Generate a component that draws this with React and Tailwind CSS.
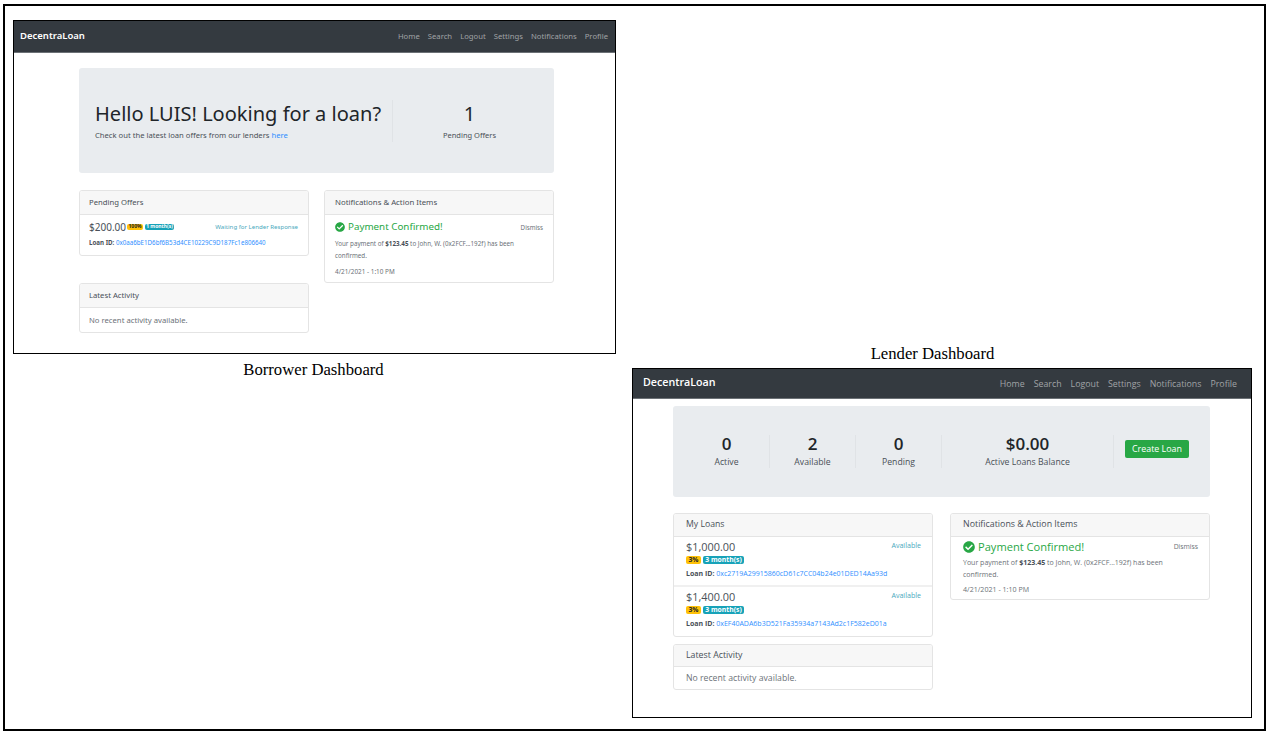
import React from 'react';
import { FaCheckCircle } from 'react-icons/fa';

const navLinks = ['Home', 'Search', 'Logout', 'Settings', 'Notifications', 'Profile'];

const Navbar = ({ height, brandClass, linkClass, gap, padding }) => (
  <div className={`flex items-center justify-between bg-[#343a40] border-b border-b-[#6c7176] ${height} ${padding}`}>
    <span className={`font-semibold text-white ${brandClass}`}>DecentraLoan</span>
    <div className={`flex pt-px ${gap}`}>
      {navLinks.map(link => (
        <span key={link} className={`text-[#a0a3a6] ${linkClass}`}>{link}</span>
      ))}
    </div>
  </div>
);

const Card = ({ title, headerClass, titleClass, children }) => (
  <div className="bg-white border border-[#e4e4e4] rounded-[3px] overflow-hidden">
    <div className={`flex items-center bg-[#f7f7f7] border-b border-[#e4e4e4] ${headerClass} ${titleClass}`}>
      {title}
    </div>
    {children}
  </div>
);

const Badge = ({ className, children }) => (
  <span className={`inline-flex items-center justify-center rounded-[2px] font-bold ${className}`}>{children}</span>
);

const Stat = ({ value, label, width }) => (
  <div className={`flex flex-col items-center justify-center h-[33px] border-r border-r-[#e0e3e6] ${width}`}>
    <span className="text-[17px] leading-[18px] font-semibold text-[#212529]">{value}</span>
    <span className="mt-[3px] text-[8.7px] leading-[12px] text-[#495057]">{label}</span>
  </div>
);

const BorrowerDashboard = () => (
  <div className="w-[603px] h-[334px] border border-black bg-white font-['Noto_Sans','Open_Sans',sans-serif]">
    <Navbar
      height="h-[32px]"
      padding="pl-[6px] pr-[7px]"
      brandClass="text-[9.5px]"
      linkClass="text-[7.7px]"
      gap="gap-[8px]"
    />
    <div className="pl-[65px] pr-[61px] pt-[15px]">
      <div className="flex items-center h-[105px] bg-[#e9ecef] rounded-[3px]">
        <div className="w-[314px] h-[42px] pl-[16px] border-r border-r-[#e0e3e6]">
          <div className="pt-px text-[20.05px] leading-[26px] text-[#212529] whitespace-nowrap">Hello LUIS! Looking for a loan?</div>
          <div className="mt-px text-[7.65px] leading-[14px] text-[#495057]">
            Check out the latest loan offers from our lenders <span className="text-[#2f8fff]">here</span>
          </div>
        </div>
        <div className="flex-1 flex flex-col items-center pr-[8px]">
          <span className="pt-px text-[20.05px] leading-[26px] text-[#212529]">1</span>
          <span className="mt-px text-[7.5px] leading-[14px] text-[#495057]">Pending Offers</span>
        </div>
      </div>

      <div className="grid grid-cols-[230px_230px] gap-[15px] mt-[17px]">
        <div className="flex flex-col gap-[27px]">
          <Card title="Pending Offers" headerClass="h-[24px] pl-[9px] pt-px" titleClass="text-[7.7px] text-[#495057]">
            <div className="h-[40px] px-[9px] pt-[4px]">
              <div className="flex items-center justify-between h-[16px]">
                <div className="flex items-center gap-[1px]">
                  <span className="text-[10px] text-[#495057]">$200.00</span>
                  <Badge className="w-[16px] h-[6px] bg-[#ffc107] text-[#212529] text-[5px]">100%</Badge>
                  <Badge className="w-[29px] h-[6px] ml-[1px] bg-[#17a2b8] text-white text-[5px]">1 month(s)</Badge>
                </div>
                <span className="pr-[1px] text-[6.1px] text-[#4aa9bd]">Waiting for Lender Response</span>
              </div>
              <div className="mt-[2px] text-[6.2px] leading-[11px] text-[#495057]">
                <b>Loan ID:</b> <span className="text-[#2f8fff]">0x0aa6bE1D6bf6B53d4CE10229C9D187Fc1e806640</span>
              </div>
            </div>
          </Card>
          <Card title="Latest Activity" headerClass="h-[24px] pl-[9px] pt-px" titleClass="text-[7.7px] text-[#495057]">
            <div className="h-[24px] flex items-center pl-[9px] pt-[2px] text-[7.7px] text-[#6c7278]">No recent activity available.</div>
          </Card>
        </div>
        <div>
          <Card title="Notifications & Action Items" headerClass="h-[24px] pl-[10px] pt-px" titleClass="text-[7.8px] text-[#495057]">
            <div className="h-[67px] px-[10px] pt-[4px]">
              <div className="flex items-center justify-between">
                <div className="flex items-center gap-[3px] text-[#28a745]">
                  <FaCheckCircle className="text-[10px]" />
                  <span className="text-[9.8px] leading-[16px]">Payment Confirmed!</span>
                </div>
                <span className="pt-px text-[6.2px] text-[#6c7278]">Dismiss</span>
              </div>
              <div className="mt-[3px] w-[185px] text-[6.25px] leading-[12px] text-[#6c7278]">
                Your payment of <b className="text-[#495057]">$123.45</b> to John, W. (0x2FCF...192f) has been confirmed.
              </div>
              <div className="mt-[4px] text-[6.4px] leading-[12px] text-[#6c7278]">4/21/2021 - 1:10 PM</div>
            </div>
          </Card>
        </div>
      </div>
    </div>
  </div>
);

const LoanRow = ({ amount, loanId, height, last }) => (
  <div className={`pl-[12px] pr-[11px] pt-[2px] ${height} ${last ? '' : 'border-b-2 border-b-[#f0f0f0]'}`}>
    <div className="flex justify-between h-[16px]">
      <span className="text-[10.9px] leading-[16px] text-[#495057]">{amount}</span>
      <span className="text-[7.1px] leading-[12px] text-[#4aa9bd]">Available</span>
    </div>
    <div className="flex gap-[2px] mt-[1px]">
      <Badge className="w-[15px] h-[8px] bg-[#ffc107] text-[#212529] text-[6.8px]">3%</Badge>
      <Badge className="w-[41px] h-[8px] bg-[#17a2b8] text-white text-[6.8px]">3 month(s)</Badge>
    </div>
    <div className="mt-[4px] text-[7px] leading-[11px] text-[#495057] whitespace-nowrap">
      <b>Loan ID:</b> <span className="text-[#2f8fff]">{loanId}</span>
    </div>
  </div>
);

const LenderDashboard = () => (
  <div className="w-[620px] h-[350px] border border-black bg-white font-['Open_Sans','Noto_Sans',sans-serif]">
    <Navbar
      height="h-[30px]"
      padding="pl-[10px] pr-[14px]"
      brandClass="text-[10.7px] pb-[3px]"
      linkClass="text-[8.8px] pt-px"
      gap="gap-[9px]"
    />
    <div className="pl-[40px] pr-[41px] pt-[7px]">
      <div className="flex items-center h-[91px] pl-[11px] bg-[#e9ecef] rounded-[3px]">
        <Stat value="0" label="Active" width="w-[86px]" />
        <Stat value="2" label="Available" width="w-[86px]" />
        <Stat value="0" label="Pending" width="w-[86px]" />
        <Stat value="$0.00" label="Active Loans Balance" width="w-[172px]" />
        <button className="ml-[11px] mb-[6px] w-[64px] h-[18px] bg-[#28a745] rounded-[2px] text-white text-[8.9px]">Create Loan</button>
      </div>

      <div className="grid grid-cols-[260px_260px] gap-[17px] mt-[16px]">
        <div className="flex flex-col gap-[7px]">
          <Card title="My Loans" headerClass="h-[23px] pl-[12px]" titleClass="text-[8.7px] text-[#495057]">
            <LoanRow amount="$1,000.00" loanId="0xc2719A29915860cD61c7CC04b24e01DED14Aa93d" height="h-[50px]" />
            <LoanRow amount="$1,400.00" loanId="0xEF40ADA6b3D521Fa35934a7143Ad2c1F582eD01a" height="h-[49px]" last />
          </Card>
          <Card title="Latest Activity" headerClass="h-[22px] pl-[12px]" titleClass="text-[8.8px] text-[#495057]">
            <div className="h-[22px] flex items-center pl-[12px] pt-px text-[8.7px] text-[#6c7278]">No recent activity available.</div>
          </Card>
        </div>
        <div>
          <Card title="Notifications & Action Items" headerClass="h-[23px] pl-[12px]" titleClass="text-[8.85px] text-[#495057]">
            <div className="h-[62px] pl-[12px] pr-[11px] pt-[2px]">
              <div className="flex items-center justify-between">
                <div className="flex items-center gap-[3px] text-[#28a745]">
                  <FaCheckCircle className="text-[12px]" />
                  <span className="text-[11.1px] leading-[16px]">Payment Confirmed!</span>
                </div>
                <span className="pt-px text-[6.8px] text-[#6c7278]">Dismiss</span>
              </div>
              <div className="mt-[2px] w-[210px] text-[7px] leading-[12px] text-[#6c7278]">
                Your payment of <b className="text-[#495057]">$123.45</b> to John, W. (0x2FCF...192f) has been confirmed.
              </div>
              <div className="mt-[2px] text-[7.1px] leading-[12px] text-[#6c7278]">4/21/2021 - 1:10 PM</div>
            </div>
          </Card>
        </div>
      </div>
    </div>
  </div>
);

const App = () => (
  <div className="pl-[3px] pt-[4px] w-[1269px] h-[735px] bg-white">
    <div className="flex w-[1263px] h-[727px] border-2 border-black font-['Liberation_Serif',serif]">
      <div className="ml-[8px] pt-[14px]">
        <BorrowerDashboard />
        <div className="mt-[6px] pr-[2px] text-center text-[16.7px] leading-[19px] text-black">Borrower Dashboard</div>
      </div>
      <div className="ml-[16px] pt-[338px]">
        <div className="mb-[5px] pr-[19px] text-center text-[16.7px] leading-[19px] text-black">Lender Dashboard</div>
        <LenderDashboard />
      </div>
    </div>
  </div>
);

export default App;
